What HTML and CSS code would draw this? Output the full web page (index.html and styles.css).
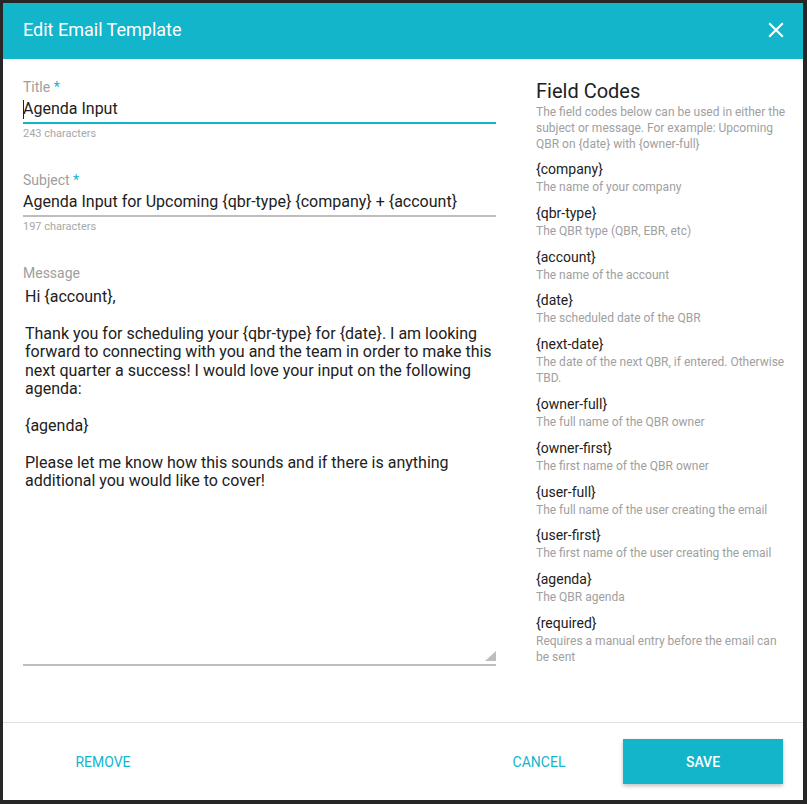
FILE: index.html
```html
<!DOCTYPE html>
<html>
	<head>
		<meta charset="utf-8">
		<meta name="viewport" content="width=device-width">
		<title>Edit Email Template</title>
		<link rel="stylesheet" href="styles.css">
	</head>

	<body>
		<div class="dialog">
			<header class="dialog-header">
				<h1>Edit Email Template</h1>
				<button class="close" type="button" aria-label="Close">
					<svg viewBox="0 0 24 24" width="26" height="26"><path d="M19 6.41L17.59 5 12 10.59 6.41 5 5 6.41 10.59 12 5 17.59 6.41 19 12 13.41 17.59 19 19 17.59 13.41 12z"/></svg>
				</button>
			</header>

			<div class="dialog-body">
				<form class="template-form">
					<label class="field">
						<span class="field-label">Title <em>*</em></span>
						<span class="field-input is-focused">
							<span class="caret"></span>
							<input type="text" value="Agenda Input">
						</span>
						<span class="field-help">243 characters</span>
					</label>

					<label class="field">
						<span class="field-label">Subject <em>*</em></span>
						<span class="field-input">
							<input type="text" value="Agenda Input for Upcoming {qbr-type} {company} + {account}">
						</span>
						<span class="field-help">197 characters</span>
					</label>

					<label class="field">
						<span class="field-label">Message</span>
						<span class="message-wrap">
							<textarea class="message">Hi {account},

Thank you for scheduling your {qbr-type} for {date}. I am looking forward to connecting with you and the team in order to make this next quarter a success! I would love your input on the following agenda:

{agenda}

Please let me know how this sounds and if there is anything additional you would like to cover!</textarea>
						</span>
					</label>
				</form>

				<aside class="field-codes">
					<h2>Field Codes</h2>
					<p>The field codes below can be used in either the subject or message. For example: Upcoming QBR on {date} with {owner-full}</p>
					<dl>
						<dt>{company}</dt>
						<dd>The name of your company</dd>
						<dt>{qbr-type}</dt>
						<dd>The QBR type (QBR, EBR, etc)</dd>
						<dt>{account}</dt>
						<dd>The name of the account</dd>
						<dt>{date}</dt>
						<dd>The scheduled date of the QBR</dd>
						<dt>{next-date}</dt>
						<dd>The date of the next QBR, if entered. Otherwise TBD.</dd>
						<dt>{owner-full}</dt>
						<dd>The full name of the QBR owner</dd>
						<dt>{owner-first}</dt>
						<dd>The first name of the QBR owner</dd>
						<dt>{user-full}</dt>
						<dd>The full name of the user creating the email</dd>
						<dt>{user-first}</dt>
						<dd>The first name of the user creating the email</dd>
						<dt>{agenda}</dt>
						<dd>The QBR agenda</dd>
						<dt>{required}</dt>
						<dd>Requires a manual entry before the email can be sent</dd>
					</dl>
				</aside>
			</div>

			<footer class="dialog-footer">
				<button class="btn" type="button">Remove</button>
				<span class="spacer"></span>
				<button class="btn" type="button">Cancel</button>
				<button class="btn btn-primary" type="button">Save</button>
			</footer>
		</div>
	</body>

</html>
```

FILE: styles.css
```css
html,
body {
	margin: 0;
	height: 100%;
}
body {
	background: #262626;
	font-family: Roboto, "Liberation Sans", sans-serif;
	color: #212121;
	overflow: hidden;
}
.dialog {
	display: flex;
	flex-direction: column;
	width: 800px;
	height: 797px;
	margin: 3px 0 0 3px;
	background: #fff;
}
.dialog-header {
	display: flex;
	align-items: center;
	justify-content: space-between;
	flex: none;
	height: 56px;
	box-sizing: border-box;
	padding: 0 14px 3px 20px;
	background: #13b5ca;
	color: #fff;
}
.dialog-header h1 {
	margin: 0;
	font-size: 18px;
	font-weight: 400;
}
.close {
	display: flex;
	padding: 0;
	border: 0;
	background: none;
	fill: #fff;
	cursor: pointer;
}
.dialog-body {
	display: flex;
	flex: 1;
	gap: 40px;
	padding: 20px 17px 0 20px;
}
.template-form {
	display: flex;
	flex-direction: column;
	width: 473px;
	flex: none;
}
.field {
	display: flex;
	flex-direction: column;
	margin-bottom: 30px;
}
.field-label {
	font-size: 14px;
	line-height: 16px;
	color: #9e9e9e;
}
.field-label em {
	font-style: normal;
	color: #13b5ca;
}
.field-input {
	position: relative;
	display: flex;
	border-bottom: 2px solid #bdbdbd;
}
.field-input.is-focused {
	border-bottom-color: #13b5ca;
}
.field-input input {
	width: 100%;
	height: 27px;
	padding: 0;
	border: 0;
	outline: none;
	font: 16px Roboto, "Liberation Sans", sans-serif;
	color: #212121;
	background: none;
}
.caret {
	position: absolute;
	left: 0;
	top: 5px;
	width: 1px;
	height: 19px;
	background: #212121;
}
.field-help {
	margin-top: 2px;
	font-size: 11px;
	line-height: 16px;
	color: #a8a8a8;
}
.message-wrap {
	position: relative;
	display: flex;
}
.message-wrap::after {
	content: "";
	position: absolute;
	right: 0;
	bottom: 5px;
	width: 11px;
	height: 10px;
	background: #bdbdbd;
	clip-path: polygon(100% 0, 100% 100%, 0 100%);
	pointer-events: none;
}
.message {
	width: 100%;
	height: 385px;
	box-sizing: border-box;
	padding: 7px 2px;
	border: 0;
	border-bottom: 2px solid #bdbdbd;
	outline: none;
	resize: none;
	font: 16px/18.4px Roboto, "Liberation Sans", sans-serif;
	color: #212121;
}
.field-codes {
	width: 250px;
	flex: none;
}
.field-codes h2 {
	margin: 0;
	font-size: 20px;
	font-weight: 400;
	line-height: 25px;
}
.field-codes p {
	margin: 0 0 7px;
	font-size: 12px;
	line-height: 16px;
	color: #a0a0a0;
}
.field-codes dl {
	margin: 0;
}
.field-codes dt {
	font-size: 14px;
	line-height: 20px;
}
.field-codes dd {
	margin: 0 0 7.8px;
	font-size: 12px;
	line-height: 16px;
	color: #a0a0a0;
}
.dialog-footer {
	display: flex;
	align-items: center;
	gap: 4px;
	flex: none;
	height: 78px;
	box-sizing: border-box;
	padding: 0 20px;
	border-top: 1px solid #e0e0e0;
}
.spacer {
	flex: 1;
}
.btn {
	width: 160px;
	height: 45px;
	padding: 0;
	border: 0;
	background: none;
	font: 14px Roboto, "Liberation Sans", sans-serif;
	text-transform: uppercase;
	color: #13b5ca;
	cursor: pointer;
}
.btn-primary {
	background: #13b5ca;
	color: #fff;
	font-weight: 500;
	box-shadow: 0 2px 4px rgba(0, 0, 0, 0.25);
}
```
